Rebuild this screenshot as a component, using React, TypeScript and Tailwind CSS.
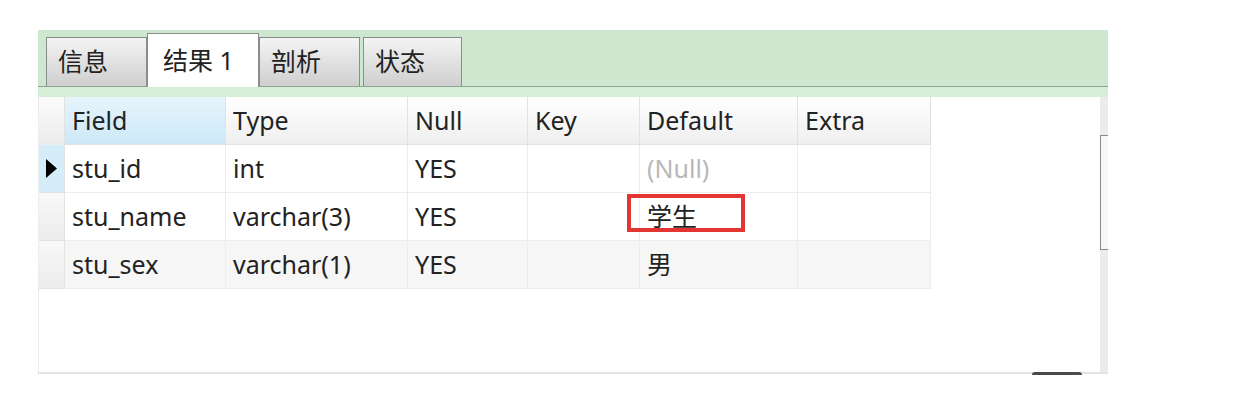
import React from 'react';

const font = { fontFamily: '"Noto Sans", "Noto Sans CJK SC", sans-serif' };

const cols = [
  { name: 'Field', w: 'w-[161px]' },
  { name: 'Type', w: 'w-[182px]' },
  { name: 'Null', w: 'w-[120px]' },
  { name: 'Key', w: 'w-[112px]' },
  { name: 'Default', w: 'w-[158px]' },
  { name: 'Extra', w: 'w-[133px]' },
];

const rows = [
  ['stu_id', 'int', 'YES', '', null, ''],
  ['stu_name', 'varchar(3)', 'YES', '', '学生', ''],
  ['stu_sex', 'varchar(1)', 'YES', '', '男', ''],
];

function Tab({ label, active, w }: { label: string; active?: boolean; w: string }) {
  if (active) {
    return (
      <div className={`${w} h-[54px] bg-white border border-b-0 border-[#8c8c8c] flex items-center pl-[15px] text-[25px] text-[#222] -mb-px relative z-10`}>
        {label}
      </div>
    );
  }
  return (
    <div className={`${w} h-[49px] bg-gradient-to-b from-[#f4f4f4] to-[#cfcfcf] border border-b-0 border-[#8c8c8c] flex items-center pl-[11px] text-[25px] text-[#222]`}>
      {label}
    </div>
  );
}

export default function App() {
  return (
    <div className="w-[1237px] h-[400px] bg-white pt-[30px] pl-[38px]" style={font}>
      <div className="w-[1070px]">
        {/* Tabs */}
        <div className="h-[57px] bg-[#cde8cf] flex items-end pl-[8px] border-b border-[#8ea68f]">
          <Tab label="信息" w="w-[101px]" />
          <Tab label="结果 1" active w="w-[112px]" />
          <Tab label="剖析" w="w-[101px]" />
          <div className="w-[3px]" />
          <Tab label="状态" w="w-[99px]" />
        </div>
        <div className="h-[10px] bg-[#d6edd7]" />

        {/* Grid */}
        <div className="flex h-[277px] bg-white border-b-2 border-[#e4e4e4] relative">
          <div className="flex-1 border-l border-[#ececec]">
            {/* header */}
            <div className="flex h-[48px]">
              <div className="w-[26px] bg-gradient-to-b from-[#fbfbfb] to-[#ececec] border-r border-[#e2e2e2]" />
              {cols.map((c, i) => (
                <div
                  key={c.name}
                  className={`${c.w} h-full flex items-center pl-[7px] text-[25px] text-[#222] border-r border-b border-[#e2e2e2] ${
                    i === 0 ? 'bg-gradient-to-b from-[#e6f4fc] to-[#cde9f8]' : 'bg-gradient-to-b from-[#ffffff] to-[#efefef]'
                  }`}
                >
                  {c.name}
                </div>
              ))}
            </div>
            {/* rows */}
            {rows.map((r, ri) => (
              <div key={ri} className="flex h-[48px]">
                <div
                  className={`w-[26px] flex items-center justify-center border-r border-b border-[#e2e2e2] ${
                    ri === 0 ? 'bg-[#d5ecf9]' : 'bg-gradient-to-b from-[#f8f8f8] to-[#ececec]'
                  }`}
                >
                  {ri === 0 && (
                    <svg width="11" height="19" viewBox="0 0 11 19">
                      <path d="M0 0 L11 9.5 L0 19 Z" fill="#000" />
                    </svg>
                  )}
                </div>
                {r.map((v, ci) => (
                  <div
                    key={ci}
                    className={`${cols[ci].w} h-full flex items-center pl-[7px] text-[25px] border-r border-b border-[#ececec] relative ${
                      ri === 2 ? 'bg-[#f6f6f6]' : 'bg-white'
                    } ${v === null ? 'text-[#b8b8b8]' : 'text-[#222]'}`}
                  >
                    {v === null ? '(Null)' : v}
                    {ri === 1 && ci === 4 && (
                      <div className="absolute left-[-13px] top-[1px] w-[118px] h-[38px] border-[4px] border-[#e43535]" />
                    )}
                  </div>
                ))}
              </div>
            ))}
          </div>
          {/* scrollbar */}
          <div className="w-[8px] bg-[#ececec] flex flex-col pt-[38px]">
            <div className="h-[115px] border border-r-0 border-[#8a8a8a] bg-[#f7f7f7]" />
          </div>
          <div className="absolute bottom-[-3px] left-[994px] w-[50px] h-[3px] bg-[#4a4a4a] rounded-t" />
        </div>
      </div>
    </div>
  );
}
